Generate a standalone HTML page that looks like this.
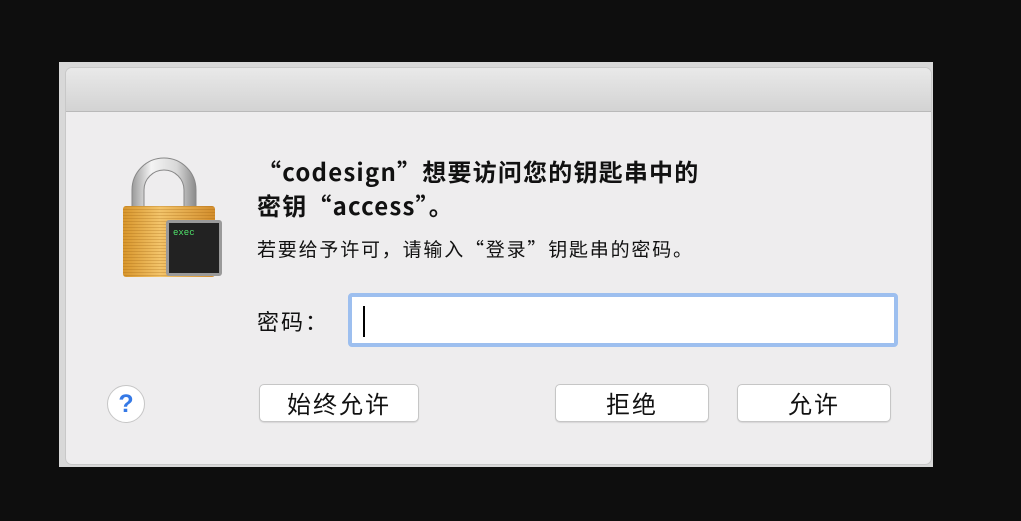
<!DOCTYPE html>
<html><head><meta charset="utf-8"><style>
*{margin:0;padding:0;box-sizing:border-box}
body{width:1021px;height:521px;background:#0e0e0e;position:relative;overflow:hidden;font-family:"Liberation Sans","Noto Sans CJK SC",sans-serif;color:#111}
.back{position:absolute;left:59px;top:62px;width:874px;height:405px;background:#d8d8d8}
.win{position:absolute;left:65px;top:67px;width:867px;height:398px;background:#eeedee;border-radius:7px;overflow:hidden;border:1px solid #c8c8c8}
.tb{height:44px;background:linear-gradient(#e9e9e9,#d3d3d3);border-bottom:1px solid #b9b9b9}
.cj{font-family:"Noto Sans CJK SC","Liberation Sans",sans-serif}
.t{position:absolute;font-weight:bold;font-size:24px;letter-spacing:1.2px;left:257px;white-space:nowrap;line-height:34px}
.s{position:absolute;left:257px;top:236px;font-size:19px;letter-spacing:1.8px;white-space:nowrap;line-height:26px}
.lbl{position:absolute;left:257px;top:306px;font-size:22px;letter-spacing:2px;line-height:30px}
.inp{position:absolute;left:348px;top:293px;width:550px;height:54px;background:#fff;border:4px solid #9dbfef;border-radius:4px}
.inp:after{content:"";position:absolute;left:11px;top:9px;width:2px;height:31px;background:#000}
.btn{position:absolute;top:384px;height:38px;background:#fff;border:1px solid #c6c6c6;border-radius:5px;font-size:24px;letter-spacing:2px;text-align:center;line-height:36px;box-shadow:0 1px 1px rgba(0,0,0,.1)}
.help{position:absolute;left:107px;top:385px;width:38px;height:38px;border-radius:50%;background:#fff;border:1px solid #c6c6c6;color:#3579e6;font-size:25px;font-weight:bold;text-align:center;line-height:36px}
</style></head><body>
<div class="back"></div>
<div class="win"><div class="tb"></div></div>
<svg style="position:absolute;left:118px;top:152px" width="110" height="130" viewBox="0 0 110 130">
<defs><linearGradient id="sh" x1="0" x2="1"><stop offset="0" stop-color="#9a9a9a"/><stop offset=".3" stop-color="#f4f4f4"/><stop offset=".7" stop-color="#d8d8d8"/><stop offset="1" stop-color="#8a8a8a"/></linearGradient>
<linearGradient id="bd" x1="0" x2="1"><stop offset="0" stop-color="#d8962c"/><stop offset=".4" stop-color="#f3c46a"/><stop offset="1" stop-color="#d38e2c"/></linearGradient>
<pattern id="ln" width="4" height="3" patternUnits="userSpaceOnUse"><rect width="4" height="1" fill="rgba(150,90,10,.25)"/></pattern></defs>
<path d="M14 55V38a32 32 0 0 1 64 0v17h-12V38a20 20 0 0 0-40 0v17z" fill="url(#sh)" stroke="#888" stroke-width="1"/>
<rect x="5" y="54" width="92" height="71" rx="3" fill="url(#bd)"/>
<rect x="5" y="54" width="92" height="71" rx="3" fill="url(#ln)"/>
<rect x="48" y="68" width="56" height="56" rx="3" fill="#9a9a9a"/>
<rect x="51" y="71" width="50" height="50" fill="#222"/>
<text x="55" y="83" font-family="Liberation Mono,monospace" font-size="9" fill="#4fe36a">exec</text>
</svg>
<div class="t cj" style="top:154px">“codesign”想要访问您的钥匙串中的</div>
<div class="t cj" style="top:188px">密钥“access”。</div>
<div class="s cj">若要给予许可，请输入“登录”钥匙串的密码。</div>
<div class="lbl cj">密码：</div>
<div class="inp"></div>
<div class="help">?</div>
<div class="btn cj" style="left:259px;width:160px">始终允许</div>
<div class="btn cj" style="left:555px;width:154px">拒绝</div>
<div class="btn cj" style="left:737px;width:154px">允许</div>
</body></html>
